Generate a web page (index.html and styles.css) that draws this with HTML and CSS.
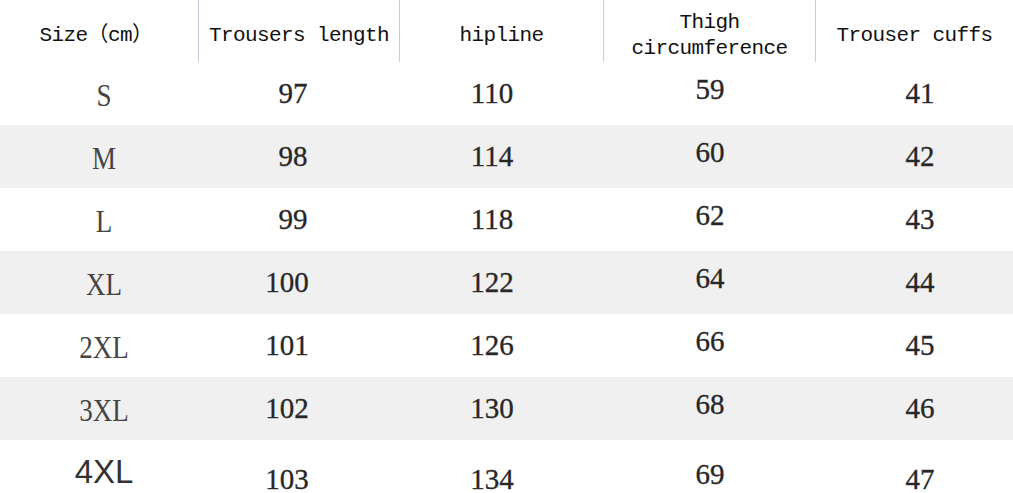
FILE: index.html
```html
<!DOCTYPE html>
<html lang="en">
<head>
<meta charset="utf-8">
<title>Size chart</title>
<link rel="stylesheet" href="styles.css">
</head>
<body>
<div class="chart">
  <div class="head">
    <div class="hcell">Size（cm）</div>
    <div class="hcell">Trousers length</div>
    <div class="hcell">hipline</div>
    <div class="hcell">Thigh<br>circumference</div>
    <div class="hcell">Trouser cuffs</div>
  </div>
  <div class="rows">
    <div class="row">
      <div class="cell size">S</div><div class="cell len">97</div><div class="cell">110</div><div class="cell thigh">59</div><div class="cell cuff">41</div>
    </div>
    <div class="row alt">
      <div class="cell size">M</div><div class="cell len">98</div><div class="cell">114</div><div class="cell thigh">60</div><div class="cell cuff">42</div>
    </div>
    <div class="row">
      <div class="cell size">L</div><div class="cell len">99</div><div class="cell">118</div><div class="cell thigh">62</div><div class="cell cuff">43</div>
    </div>
    <div class="row alt">
      <div class="cell size">XL</div><div class="cell len-wide">100</div><div class="cell">122</div><div class="cell thigh">64</div><div class="cell cuff">44</div>
    </div>
    <div class="row">
      <div class="cell size">2XL</div><div class="cell len-wide">101</div><div class="cell">126</div><div class="cell thigh">66</div><div class="cell cuff">45</div>
    </div>
    <div class="row alt">
      <div class="cell size">3XL</div><div class="cell len-wide">102</div><div class="cell">130</div><div class="cell thigh">68</div><div class="cell cuff">46</div>
    </div>
    <div class="row last">
      <div class="cell size sans">4XL</div><div class="cell len-wide">103</div><div class="cell">134</div><div class="cell thigh">69</div><div class="cell cuff">47</div>
    </div>
  </div>
</div>
</body>
</html>
```

FILE: styles.css
```css
html, body {
  margin: 0;
  padding: 0;
  overflow: hidden;
  background: #ffffff;
}

.chart {
  width: 1013px;
  height: 493px;
  overflow: hidden;
}

.head {
  display: grid;
  grid-template-columns: 198px 201px 204px 212px 198px;
  height: 62px;
  background: #ffffff;
}

.hcell {
  display: flex;
  align-items: center;
  justify-content: center;
  text-align: center;
  font-family: "Liberation Mono", "Noto Sans CJK SC", monospace;
  font-size: 21px;
  letter-spacing: -0.6px;
  line-height: 26px;
  color: #111111;
  padding-top: 10px;
}

.hcell + .hcell {
  border-left: 1px solid #c4cddc;
}

.hcell:first-child {
  padding-right: 6px;
}

.rows {
  display: flex;
  flex-direction: column;
}

.row {
  display: grid;
  grid-template-columns: 208px 164px 240px 196px 1fr;
  height: 63px;
  background: #ffffff;
}

.row.alt {
  background: #f0f0f0;
}

.row.last {
  height: 78px;
}

.cell {
  display: flex;
  align-items: center;
  justify-content: center;
  font-family: "Liberation Serif", "Times New Roman", serif;
  font-size: 29px;
  line-height: 1;
  color: #262626;
  -webkit-text-stroke: 0.35px #333333;
}

.cell.size {
  font-size: 27px;
  color: #454545;
  padding-top: 4px;
  -webkit-text-stroke: 0;
  transform: scaleY(1.15);
}

.cell.len {
  padding-left: 6px;
}

.cell.len-wide {
  padding-right: 6px;
}

.cell.thigh {
  padding-bottom: 9px;
}

.cell.cuff {
  padding-left: 19px;
}

.row.last .cell.size {
  padding-top: 0;
  padding-bottom: 16px;
  transform: none;
}

.cell.sans {
  font-family: "Liberation Sans", Arial, sans-serif;
  font-size: 33px;
  color: #333333;
}
```
